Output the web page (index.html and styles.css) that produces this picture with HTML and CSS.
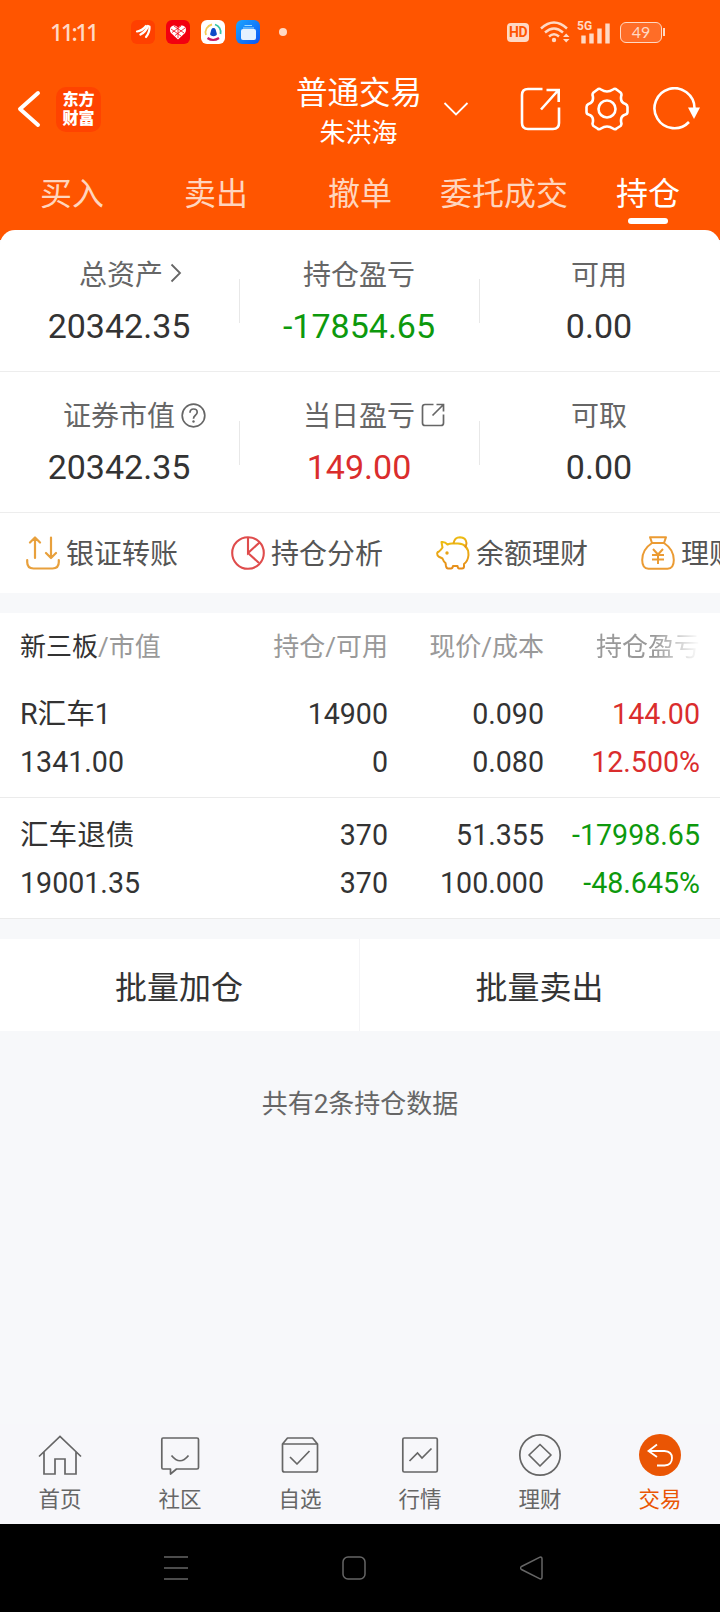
FILE: index.html
```html
<!DOCTYPE html>
<html lang="zh-CN">
<head>
    <meta charset="UTF-8">
    <meta name="viewport" content="width=device-width, initial-scale=1.0">
    <title>普通交易 - 持仓</title>
    <link rel="stylesheet" href="styles.css">
</head>
<body>

    <header class="header">
        <div class="status-bar">
            <span class="clock">11:11</span>
            <div class="app-icons">
                <svg width="24" height="24" viewBox="0 0 24 24"><rect width="24" height="24" rx="6" fill="#ff4000"/><g fill="none" stroke="#fff" stroke-linecap="round"><path d="M6 11.500Q11 11 15 6" stroke-width="2.200"/><path d="M9.500 14.500Q14.500 12 17 6" stroke-width="2.400"/><path d="M15 17Q19 12 18.500 6.500" stroke-width="2.200"/></g></svg>
                <svg width="24" height="24" viewBox="0 0 24 24"><rect width="24" height="24" rx="6" fill="#f20010"/><path d="M12 19.500L5 13C2.500 9 5 5 8.500 5.500C10.500 5.700 12 8 12 8C12 8 13.500 5.700 15.500 5.500C19 5 21.500 9 19 13Z" fill="#fff"/><path d="M5 9L15 16M8 6L18 13M19 8L9 15.500M15 6L6 12.500M12 8V18" stroke="#f20010" stroke-width=".8" fill="none"/></svg>
                <svg width="24" height="24" viewBox="0 0 24 24"><rect width="24" height="24" rx="6" fill="#fff"/><g fill="none" stroke-width="1.800"><path d="M5 15A8 8 0 0 1 11 4.500" stroke="#f3cd55"/><path d="M14 4.500A8 8 0 0 1 19.500 14" stroke="#35c5a5"/><path d="M6.500 18Q12 22 18 18" stroke="#c81c65" stroke-width="2.200"/></g><path d="M12.500 8C14.600 8 14.800 10 15.300 12Q16.500 15 15 15.500Q12.500 17 10 15.500Q8.500 15 9.700 12C10.200 10 10.400 8 12.500 8Z" fill="#0b4bc8"/></svg>
                <svg width="24" height="24" viewBox="0 0 24 24"><defs><linearGradient id="files" x1="0" y1="0" x2="1" y2="1"><stop stop-color="#1ba6ff"/><stop offset="1" stop-color="#0a55f5"/></linearGradient></defs><rect width="24" height="24" rx="6" fill="url(#files)"/><path d="M8.500 5.500H16M7 8H18" stroke="#9fdcff" stroke-width="1"/><rect x="5" y="9" width="15" height="11" rx="2" fill="#e4f1ff"/></svg>
            </div>
            <span class="dot"></span>
            <div class="system-icons">
                <span class="hd">HD</span>
                <svg class="wifi" width="30" height="24" viewBox="0 0 30 24"><g fill="none" stroke="#ffd9c4" stroke-width="2.400"><path d="M1 8.500Q14 -3.500 27 8.500"/><path d="M5 12.500Q14 4.500 23 12.500"/><path d="M9 16.500Q14 12 19 16.500"/></g><circle cx="14" cy="20" r="2.200" fill="#ffd9c4"/><path d="M23 17L26.200 13.500L29.500 17ZM23 19L26.200 22.500L29.500 19Z" fill="#ffd9c4"/></svg>
                <div class="signal">
                    <span class="net">5G</span>
                    <svg width="31" height="24" viewBox="0 0 31 24"><path d="M4.500 23.500V15.500M12.500 23.500V13.500M20.500 23.500V8.500M28.500 23.500V3.500" stroke="#ffd9c4" stroke-width="4.400"/></svg>
                </div>
                <span class="battery">49</span>
            </div>
        </div>

        <div class="title-bar">
            <svg class="back" width="24" height="38" viewBox="0 0 24 38"><path d="M21 3L3 19L21 35" fill="none" stroke="#fff" stroke-width="4" stroke-linecap="round" stroke-linejoin="round"/></svg>
            <div class="logo">东方<br>财富</div>
            <div class="title">
                <h1>普通交易</h1>
                <p>朱洪海</p>
            </div>
            <svg class="caret" width="26" height="16" viewBox="0 0 26 16"><path d="M1.500 2L13 13.500L24.500 2" fill="none" stroke="#fff" stroke-width="1.800"/></svg>
            <div class="actions">
                <svg width="42" height="44" viewBox="0 0 42 44"><g fill="none" stroke="#fff" stroke-width="2.600"><path d="M23.500 2H9Q3 2 3 8V36Q3 42 9 42H34Q40 42 40 36V20.500"/><path d="M22 22.500L39 3.500M27.500 3H39.700V15"/></g></svg>
                <svg width="44" height="44" viewBox="0 0 44 44"><g fill="none" stroke="#fff" stroke-width="2.600" stroke-linejoin="round"><path d="M12.500 2.500Q14 1 16 2.500Q22 6.500 28 2.500Q30 1 31.500 2.500L35.500 5.500Q37 7 36.200 9Q35 15.500 40.500 17Q42.500 18 42.500 20V25Q42.500 27 40.500 27.500Q35 29 36.200 35.500Q37 37.500 35.500 39L31.500 41.500Q30 43 28 41.500Q22 37.500 16 41.500Q14 43 12.500 41.500L8.500 39Q7 37.500 7.800 35.500Q9 29 3.500 27.500Q1.500 27 1.500 25V20Q1.500 18 3.500 17Q9 15.500 7.800 9Q7 7 8.500 5.500Z"/><circle cx="22" cy="22" r="8.500"/></g></svg>
                <svg width="48" height="44" viewBox="0 0 48 44"><path d="M36 35A20 20 0 1 1 41.500 21" fill="none" stroke="#fff" stroke-width="2.600"/><path d="M35 20.500H47L41 32Z" fill="#fff"/></svg>
            </div>
        </div>

        <nav class="tabs">
            <a>买入</a>
            <a>卖出</a>
            <a>撤单</a>
            <a>委托成交</a>
            <a class="active">持仓</a>
        </nav>
    </header>

    <section class="summary">
        <div class="summary-row">
            <div class="stat">
                <div class="label nudge">总资产<svg class="label-icon arrow" width="12" height="20" viewBox="0 0 12 20"><path d="M1.500 1.500L10 10L1.500 18.500" fill="none" stroke="#666" stroke-width="1.800"/></svg></div>
                <div class="value">20342.35</div>
            </div>
            <div class="stat">
                <div class="label">持仓盈亏</div>
                <div class="value down">-17854.65</div>
            </div>
            <div class="stat">
                <div class="label">可用</div>
                <div class="value">0.00</div>
            </div>
        </div>
        <div class="summary-row">
            <div class="stat">
                <div class="label">证券市值<svg class="label-icon" width="25" height="25" viewBox="0 0 25 25"><g fill="none" stroke="#666" stroke-width="1.700"><circle cx="12.500" cy="12.500" r="11.300"/><path d="M9 9.800Q9 6 12.600 6Q16.200 6 16.200 9.300Q16.200 11 14.200 12.500Q12.500 13.800 12.500 15.700"/></g><circle cx="12.500" cy="18.500" r="1.200" fill="#666"/></svg></div>
                <div class="value">20342.35</div>
            </div>
            <div class="stat">
                <div class="label">当日盈亏<svg class="label-icon share" width="24" height="24" viewBox="0 0 24 24"><path d="M12.500 1.500H4Q1.500 1.500 1.500 4V20Q1.500 22.500 4 22.500H20Q22.500 22.500 22.500 20V11.500M11.500 12.500L22 2M15.500 1.500H22.500V8.500" fill="none" stroke="#666" stroke-width="1.700"/></svg></div>
                <div class="value up">149.00</div>
            </div>
            <div class="stat">
                <div class="label">可取</div>
                <div class="value">0.00</div>
            </div>
        </div>
    </section>

    <section class="shortcuts">
        <a>
            <svg width="34" height="34" viewBox="0 0 34 34"><g fill="none" stroke="#e8a03c" stroke-width="2.200" stroke-linecap="round" stroke-linejoin="round"><path d="M9 22V2M4 6.500L9 1.500L14 6.500M25 1.500V21.500M20 17L25 22L30 17M1.200 24V26Q1.200 32.500 7.500 32.500H26.500Q32.800 32.500 32.800 26V24"/></g></svg>
            <span>银证转账</span>
        </a>
        <a>
            <svg width="34" height="34" viewBox="0 0 34 34"><g fill="none" stroke="#df4c4c" stroke-width="2.100"><circle cx="17" cy="17" r="15.800"/><path d="M17 1V17L28.500 6.500M17 17L28 27"/></g></svg>
            <span>持仓分析</span>
        </a>
        <a>
            <svg width="34" height="34" viewBox="0 0 34 34"><defs><linearGradient id="pig" x1="0" y1="0" x2="0" y2="1"><stop stop-color="#edbd12"/><stop offset="1" stop-color="#e68c1a"/></linearGradient></defs><g fill="none" stroke="url(#pig)" stroke-width="2" stroke-linejoin="round"><path d="M5.500 6Q9 5.500 11.500 8.500Q13.500 7.500 16 7.500H22Q32.500 8 32.500 19Q32 25 28 28V30.500Q28 32.500 26 32.500H23Q22 32.500 21.500 30H17Q16.500 32.500 15 32.500H12Q10.500 32.500 10 30L9.500 27Q7.500 25.500 6.500 22.500L2.500 20.500Q1 19.500 1.200 17Q1.500 16 3 15.500Q5 14 6.500 11.500Q6 9 5.500 6Z"/><path d="M17.500 7.500Q18.500 1.200 24 1.200Q30 1.500 30.500 7Q30.500 9 29 11.500"/></g><circle cx="11" cy="17" r="1.700" fill="#e9a418"/></svg>
            <span>余额理财</span>
        </a>
        <a>
            <svg width="34" height="34" viewBox="0 0 34 34"><g fill="none" stroke="#eb9b33" stroke-width="2" stroke-linejoin="round"><path d="M9 1.200H25L23 7H11Z"/><path d="M11 7Q1.200 13.500 1.200 24Q1.200 32.500 7.500 32.800H26.500Q32.800 32.500 32.800 24Q32.800 13.500 23 7"/><path d="M12 13L17 18.500L22 13M17 18.500V28M11 19H23M11 23.500H23"/></g></svg>
            <span>理财</span>
        </a>
    </section>

    <section class="holdings">
        <div class="holdings-head">
            <span><b>新三板</b>/市值</span>
            <span>持仓/可用</span>
            <span>现价/成本</span>
            <span class="fade">持仓盈亏</span>
        </div>
        <div class="holding">
            <span>R汇车1<br>1341.00</span>
            <span>14900<br>0</span>
            <span>0.090<br>0.080</span>
            <span class="up">144.00<br>12.500%</span>
        </div>
        <div class="holding">
            <span>汇车退债<br>19001.35</span>
            <span>370<br>370</span>
            <span>51.355<br>100.000</span>
            <span class="down">-17998.65<br>-48.645%</span>
        </div>
    </section>

    <section class="batch">
        <button type="button">批量加仓</button>
        <button type="button">批量卖出</button>
    </section>

    <p class="total">共有2条持仓数据</p>

    <nav class="bottom-nav">
        <a>
            <svg width="44" height="44" viewBox="0 0 44 44"><path d="M1 23.500L22 3.500L43 23.500M6 19V41H17V26H27V41H38V19" fill="none" stroke="#666" stroke-width="1.700"/></svg>
            <span>首页</span>
        </a>
        <a>
            <svg width="44" height="44" viewBox="0 0 44 44"><g fill="none" stroke="#666" stroke-width="1.700" stroke-linejoin="round"><path d="M5 5H39Q40.500 5 40.500 6.500V34.500Q40.500 36 39 36H18.500L12.500 41V36H5Q3.800 36 3.800 34.500V6.500Q3.800 5 5 5Z"/><path d="M13.500 22.500Q22 33 30.500 22.500"/></g></svg>
            <span>社区</span>
        </a>
        <a>
            <svg width="44" height="44" viewBox="0 0 44 44"><g fill="none" stroke="#666" stroke-width="1.700" stroke-linejoin="round"><path d="M4.500 11L9.500 5H34.500L39.500 11V37Q39.500 39 37.500 39H6.500Q4.500 39 4.500 37ZM4.500 11H39.500"/><path d="M12 24L19 31L31.500 18"/></g></svg>
            <span>自选</span>
        </a>
        <a>
            <svg width="44" height="44" viewBox="0 0 44 44"><g fill="none" stroke="#666" stroke-width="1.700"><rect x="4.800" y="5" width="34.500" height="34" rx="1.500"/><path d="M11.500 28L19.500 20L24 25L33.500 15.500"/></g></svg>
            <span>行情</span>
        </a>
        <a>
            <svg width="44" height="44" viewBox="0 0 44 44"><g fill="none" stroke="#666" stroke-width="1.700" stroke-linejoin="round"><circle cx="22" cy="22" r="20.200"/><path d="M22 11.500L33 22L22 33L11 22Z"/></g></svg>
            <span>理财</span>
        </a>
        <a class="active">
            <svg width="44" height="44" viewBox="0 0 44 44"><circle cx="22" cy="22" r="21" fill="#ea5504"/><path d="M19 11.500L10.500 18L19 24M10.500 18H26.500Q34 18.500 34 25Q34 32 26.500 32.500H19" fill="none" stroke="#fff" stroke-width="1.800"/></svg>
            <span>交易</span>
        </a>
    </nav>

    <footer class="system-nav">
        <svg width="24" height="26" viewBox="0 0 24 26"><path d="M0 2H24M0 13H24M0 24H24" stroke="#666" stroke-width="1.700"/></svg>
        <svg width="24" height="26" viewBox="0 0 24 26"><rect x="1" y="2" width="22" height="22" rx="5" fill="none" stroke="#666" stroke-width="1.500"/></svg>
        <svg width="24" height="26" viewBox="0 0 24 26"><path d="M20 2.200L1.500 11.500Q-.5 13 1.500 14.500L20 23.800Q22 24.300 22 22V4Q22 1.700 20 2.200Z" fill="none" stroke="#666" stroke-width="1.500"/></svg>
    </footer>

</body>
</html>
```
FILE: styles.css
```css
* { box-sizing: border-box; }
body { margin: 0; width: 720px; height: 1612px; display: flex; flex-direction: column; overflow: hidden; background-color: #f7f8fa; color: #333; font-family: Roboto, "Noto Sans CJK SC", sans-serif; }
h1, p { margin: 0; font-weight: normal; }
svg { display: block; flex-shrink: 0; }
.up { color: #da2d2d; }
.down { color: #0d990d; }

/* header */
.header { height: 240px; flex-shrink: 0; background-color: #ff5500; color: #fff; }
.status-bar { display: flex; align-items: center; height: 64px; padding: 0 58px 0 50px; color: #ffd9c4; }
.clock { width: 81px; font-family: "Noto Sans", sans-serif; font-size: 23px; font-weight: 500; letter-spacing: -2.4px; }
.app-icons { display: flex; gap: 11px; }
.dot { width: 8px; height: 8px; margin-left: 19px; border-radius: 50%; background-color: #ffd9c4; }
.system-icons { display: flex; align-items: center; margin-left: auto; }
.hd { width: 22px; height: 19px; border-radius: 4px; background-color: #ffd9c4; color: #ff5500; font-size: 14px; font-weight: bold; line-height: 19px; letter-spacing: -0.5px; text-align: center; }
.wifi { margin-left: 11px; }
.signal { position: relative; margin-left: 9px; }
.net { position: absolute; left: -2px; top: 0; font-size: 12px; font-weight: bold; line-height: 12px; background-color: #ff5500; }
.battery { position: relative; width: 42px; height: 21px; margin-left: 10px; border: 1.5px solid #ffd9c4; border-radius: 6px; background-color: #ff6d27; font-family: Lato, sans-serif; font-size: 16px; line-height: 18px; text-align: center; }
.battery::after { content: ""; position: absolute; right: -4px; top: 5px; width: 2px; height: 8px; background-color: #ffd9c4; }

.title-bar { position: relative; display: flex; align-items: center; height: 90px; padding: 0 19px 0 17px; }
.logo { width: 45px; height: 45px; margin-left: 15px; padding-top: 3px; border-radius: 10px; background-color: #ff4300; font-size: 16px; font-weight: 900; line-height: 19px; text-align: center; }
.title { margin-left: 195px; width: 125px; padding-top: 7px; text-align: center; white-space: nowrap; }
.title h1 { font-size: 31.5px; line-height: 40px; }
.title p { font-size: 26px; line-height: 38px; }
.caret { margin-left: 22px; }
.actions { display: flex; gap: 24px; margin-left: auto; }

.tabs { display: grid; grid-template-columns: repeat(5, 144px); height: 76px; font-size: 32px; line-height: 80px; text-align: center; color: #ffd5be; }
.tabs .active { position: relative; color: #fff; }
.tabs .active::after { content: ""; position: absolute; left: 52px; top: 64px; width: 40px; height: 6px; border-radius: 3px; background-color: #fff; }

/* account summary */
.summary { position: relative; margin-top: -10px; border-radius: 15px 15px 0 0; background-color: #fff; }
.summary-row { display: flex; border-bottom: 1px solid #ededed; }
.summary-row:first-child { height: 142px; }
.summary-row:last-child { height: 141px; }
.stat { position: relative; width: 240px; padding: 26px 2px 0 0; text-align: center; }
.summary-row:last-child .stat { padding-top: 25px; }
.stat + .stat::before { content: ""; position: absolute; left: -1px; top: 49px; width: 1px; height: 44px; background-color: #e8e8e8; }
.label { position: relative; width: fit-content; margin: 0 auto; font-size: 28px; line-height: 40px; color: #666; }
.nudge { left: 2px; }
.label-icon { position: absolute; left: 100%; top: 6px; margin-left: 6px; }
.label-icon.arrow { margin-left: 7px; top: 7px; }
.value { margin-top: 10px; font-size: 34px; line-height: 40px; }

/* shortcuts */
.shortcuts { display: flex; gap: 53px; height: 80px; padding-left: 26px; overflow: hidden; background-color: #fff; font-size: 28px; color: #555; }
.shortcuts a { display: flex; align-items: center; gap: 6px; flex-shrink: 0; }
.shortcuts span { line-height: 42px; padding-top: 3px; }

/* holdings table */
.holdings { margin-top: 20px; background-color: #fff; }
.holdings-head, .holding { display: grid; grid-template-columns: 212px 156px 156px 156px; padding: 0 20px; text-align: right; }
.holdings-head { height: 64px; padding-top: 4px; font-size: 26px; line-height: 60px; color: #999; }
.holdings-head b { font-weight: normal; color: #333; }
.holdings-head span:first-child, .holding span:first-child { text-align: left; }
.fade { -webkit-mask-image: linear-gradient(to right, #000 110px, transparent 156px); mask-image: linear-gradient(to right, #000 110px, transparent 156px); }
.holding { height: 121px; padding-top: 13px; border-bottom: 1px solid #ebebeb; font-size: 28.6px; line-height: 48px; }

/* batch buttons */
.batch { display: flex; height: 92px; margin-top: 20px; }
.batch button { width: 360px; padding: 0 1px 1px 0; border: none; background-color: #fff; color: #333; font-family: inherit; font-size: 32px; }
.batch button:first-child { border-right: 1px solid #f4f4f6; }

.total { margin-top: 53px; font-size: 26px; line-height: 40px; text-align: center; color: #666; }

/* bottom navigation */
.bottom-nav { display: flex; height: 100px; margin-top: auto; background-color: #f7f7fa; font-size: 21.5px; color: #666; }
.bottom-nav a { display: flex; flex-direction: column; align-items: center; width: 120px; padding-top: 9px; }
.bottom-nav span { margin-top: 8px; line-height: 30px; }
.bottom-nav .active { color: #ea5504; }
.system-nav { display: flex; gap: 154px; height: 88px; padding: 31px 0 0 164px; background-color: #000; }
```
